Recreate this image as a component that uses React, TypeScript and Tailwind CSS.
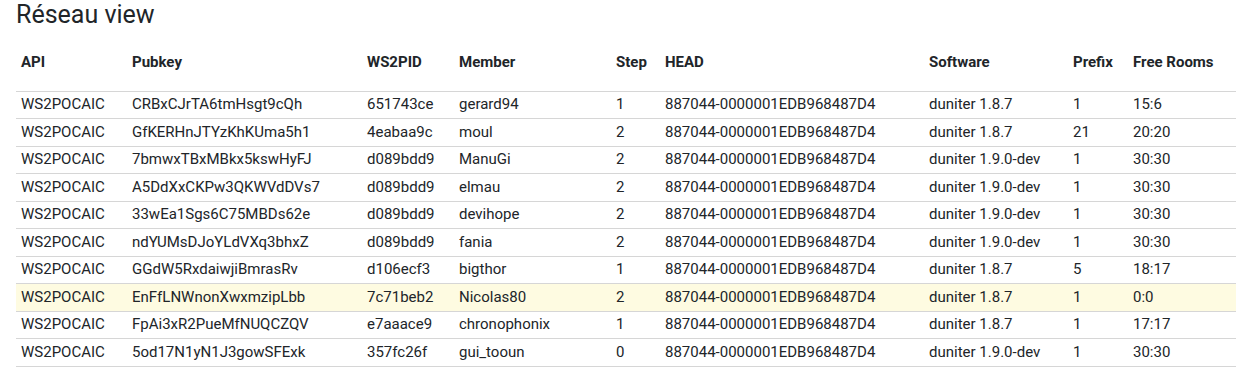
const cols = [
  { label: "API", w: "w-[111px]" },
  { label: "Pubkey", w: "w-[235px]" },
  { label: "WS2PID", w: "w-[92px]" },
  { label: "Member", w: "w-[157px]" },
  { label: "Step", w: "w-[49px]" },
  { label: "HEAD", w: "w-[264px]" },
  { label: "Software", w: "w-[144px]" },
  { label: "Prefix", w: "w-[60px]" },
  { label: "Free Rooms", w: "w-[108px]" },
];

const rows = [
  ["WS2POCAIC", "CRBxCJrTA6tmHsgt9cQh", "651743ce", "gerard94", "1", "887044-0000001EDB968487D4", "duniter 1.8.7", "1", "15:6"],
  ["WS2POCAIC", "GfKERHnJTYzKhKUma5h1", "4eabaa9c", "moul", "2", "887044-0000001EDB968487D4", "duniter 1.8.7", "21", "20:20"],
  ["WS2POCAIC", "7bmwxTBxMBkx5kswHyFJ", "d089bdd9", "ManuGi", "2", "887044-0000001EDB968487D4", "duniter 1.9.0-dev", "1", "30:30"],
  ["WS2POCAIC", "A5DdXxCKPw3QKWVdDVs7", "d089bdd9", "elmau", "2", "887044-0000001EDB968487D4", "duniter 1.9.0-dev", "1", "30:30"],
  ["WS2POCAIC", "33wEa1Sgs6C75MBDs62e", "d089bdd9", "devihope", "2", "887044-0000001EDB968487D4", "duniter 1.9.0-dev", "1", "30:30"],
  ["WS2POCAIC", "ndYUMsDJoYLdVXq3bhxZ", "d089bdd9", "fania", "2", "887044-0000001EDB968487D4", "duniter 1.9.0-dev", "1", "30:30"],
  ["WS2POCAIC", "GGdW5RxdaiwjiBmrasRv", "d106ecf3", "bigthor", "1", "887044-0000001EDB968487D4", "duniter 1.8.7", "5", "18:17"],
  ["WS2POCAIC", "EnFfLNWnonXwxmzipLbb", "7c71beb2", "Nicolas80", "2", "887044-0000001EDB968487D4", "duniter 1.8.7", "1", "0:0"],
  ["WS2POCAIC", "FpAi3xR2PueMfNUQCZQV", "e7aaace9", "chronophonix", "1", "887044-0000001EDB968487D4", "duniter 1.8.7", "1", "17:17"],
  ["WS2POCAIC", "5od17N1yN1J3gowSFExk", "357fc26f", "gui_tooun", "0", "887044-0000001EDB968487D4", "duniter 1.9.0-dev", "1", "30:30"],
];

// the row for the local node is highlighted
const selfIndex = 7;

export default function App() {
  return (
    <div className="min-h-screen bg-white px-4 text-[#212529] font-['Roboto',sans-serif]">
      <h3 className="text-[25px] leading-[30px] font-normal">Réseau view</h3>

      <table className="mt-[12px] w-[1220px] table-fixed border-collapse text-[15px] leading-[21px]">
        <colgroup>
          {cols.map((c) => (
            <col key={c.label} className={c.w} />
          ))}
        </colgroup>
        <thead>
          <tr>
            {cols.map((c) => (
              <th key={c.label} className="h-[49px] px-[5px] pb-[18px] text-left align-bottom font-bold">
                {c.label}
              </th>
            ))}
          </tr>
        </thead>
        <tbody>
          {rows.map((r, i) => (
            <tr key={i} className={`border-y border-[#d6d6d6] ${i === selfIndex ? "bg-[#fefbe1]" : ""}`}>
              {r.map((v, j) => (
                <td key={j} className="h-[27.5px] whitespace-nowrap px-[5px] py-0 align-middle">
                  {v}
                </td>
              ))}
            </tr>
          ))}
        </tbody>
      </table>
    </div>
  );
}
